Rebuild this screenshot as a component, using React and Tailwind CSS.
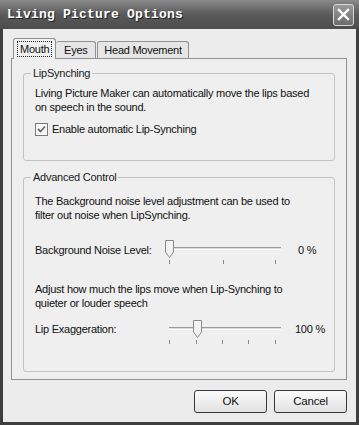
import React from "react";

const font = { fontFamily: '"Liberation Sans", Arial, sans-serif' };

const Slider = ({ pos, ticks }) => (
  <div className="relative w-[116px] h-[26px]">
    <div className="absolute left-[2px] right-[2px] top-[8px] h-[3px] border-t border-[#9a9a9a] border-b border-b-white bg-[#dcdcdc]" />
    <svg
      className="absolute top-0"
      style={{ left: pos }}
      width="11"
      height="20"
      viewBox="0 0 11 20"
    >
      <path
        d="M1.5 1.5 H9.5 V13 L5.5 18.5 L1.5 13 Z"
        fill="#f4f4f4"
        stroke="#8a8a8a"
      />
      <path d="M2.5 2.5 H8.5" stroke="#ffffff" />
    </svg>
    {ticks.map((t) => (
      <div
        key={t}
        className="absolute top-[21px] w-px h-[4px] bg-[#8a8a8a]"
        style={{ left: t }}
      />
    ))}
  </div>
);

const Group = ({ title, className, children }) => (
  <fieldset className={"border border-[#c3c3c3] rounded-[3px] mx-[11px] " + className}>
    <legend className="ml-[7px] px-[2px] leading-[14px] text-[#1a1a1a]">{title}</legend>
    {children}
  </fieldset>
);

const Button = ({ children }) => (
  <button className="w-[73px] h-[23px] rounded-[3px] border border-[#3a3a3a] bg-gradient-to-b from-[#fbfbfb] to-[#e2e2e2] text-[11.5px] tracking-[-0.2px] text-[#111]">
    {children}
  </button>
);

export default function App() {
  return (
    <div
      className="w-[359px] h-[425px] flex flex-col bg-[#3f3f3f] text-[11px] tracking-[-0.25px] text-[#111]"
      style={font}
    >
      <div className="h-[29px] flex items-center justify-between pl-[7px] pr-[5px] bg-gradient-to-b from-[#8a8a8a] via-[#5a5a5a] to-[#4c4c4c]">
        <span
          className="text-white font-bold text-[13px] tracking-[0.2px] [text-shadow:1px_1px_0_#222]"
          style={{ fontFamily: '"Liberation Mono", "Courier New", monospace' }}
        >
          Living Picture Options
        </span>
        <div className="w-[21px] h-[22px] rounded-[3px] border border-[#d8d8d8] bg-gradient-to-b from-[#9a9a9a] to-[#6c6c6c] flex items-center justify-center">
          <svg width="13" height="13" viewBox="0 0 13 13">
            <path d="M2 2 L11 11 M11 2 L2 11" stroke="white" strokeWidth="2.4" strokeLinecap="square" />
          </svg>
        </div>
      </div>
      <div className="flex-1 mx-[3px] mb-[3px] bg-[#ececec] flex flex-col pl-[8px] pr-[9px] pt-[9px]">
        <div className="flex items-end pl-[2px] h-[20px]">
          <div className="relative z-10 -mb-px h-[21px] px-[4px] border border-b-0 border-[#919191] rounded-t-[3px] bg-[#f0f0f0] flex items-center">
            <span className="outline outline-1 outline-dotted outline-[#222] px-[2px] leading-[14px]">Mouth</span>
          </div>
          <div className="h-[17px] w-[40px] border border-b-0 border-l-0 border-[#919191] rounded-t-[3px] bg-[#e6e6e6] flex items-center justify-center">
            Eyes
          </div>
          <div className="ml-[1px] h-[17px] px-[6px] border border-b-0 border-[#919191] rounded-t-[3px] bg-[#e6e6e6] flex items-center">
            Head Movement
          </div>
        </div>
        <div className="h-[322px] border border-[#919191] bg-[#efefef] pt-[7px]">
          <Group title="LipSynching" className="h-[95px]">
            <div className="pl-[11px] pt-[6px]">
              <p className="leading-[14px]">
                Living Picture Maker can automatically move the lips based
                <br />
                on speech in the sound.
              </p>
              <div className="flex items-center gap-[4px] mt-[7px]">
                <div className="w-[13px] h-[13px] border border-[#7a7a7a] bg-[#f8f8f8] flex items-center justify-center">
                  <svg width="9" height="9" viewBox="0 0 9 9">
                    <path d="M1 4 L3.5 6.5 L8 1.5" fill="none" stroke="#6a6a6a" strokeWidth="1.8" />
                  </svg>
                </div>
                <span>Enable automatic Lip-Synching</span>
              </div>
            </div>
          </Group>
          <Group title="Advanced Control" className="h-[202px] mt-[9px]">
            <div className="pl-[11px] pt-[10px]">
              <p className="leading-[14px]">
                The Background noise level adjustment can be used to
                <br />
                filter out noise when LipSynching.
              </p>
              <div className="flex mt-[17px] h-[26px]">
                <span className="w-[132px] leading-[14px] pt-[4px]">Background Noise Level:</span>
                <Slider pos={-3} ticks={[2, 56, 108]} />
                <span className="ml-[15px] pt-[4px] leading-[14px]">0 %</span>
              </div>
              <p className="leading-[14px] mt-[17px]">
                Adjust how much the lips move when Lip-Synching to
                <br />
                quieter or louder speech
              </p>
              <div className="flex mt-[9px] h-[26px]">
                <span className="w-[132px] leading-[14px] pt-[3px]">Lip Exaggeration:</span>
                <Slider pos={25} ticks={[2, 29, 55, 81, 108]} />
                <span className="ml-[12px] pt-[3px] leading-[14px]">100 %</span>
              </div>
            </div>
          </Group>
        </div>
        <div className="flex justify-end gap-[7px] mt-[10px] pr-[0px]">
          <Button>OK</Button>
          <Button>Cancel</Button>
        </div>
      </div>
    </div>
  );
}
